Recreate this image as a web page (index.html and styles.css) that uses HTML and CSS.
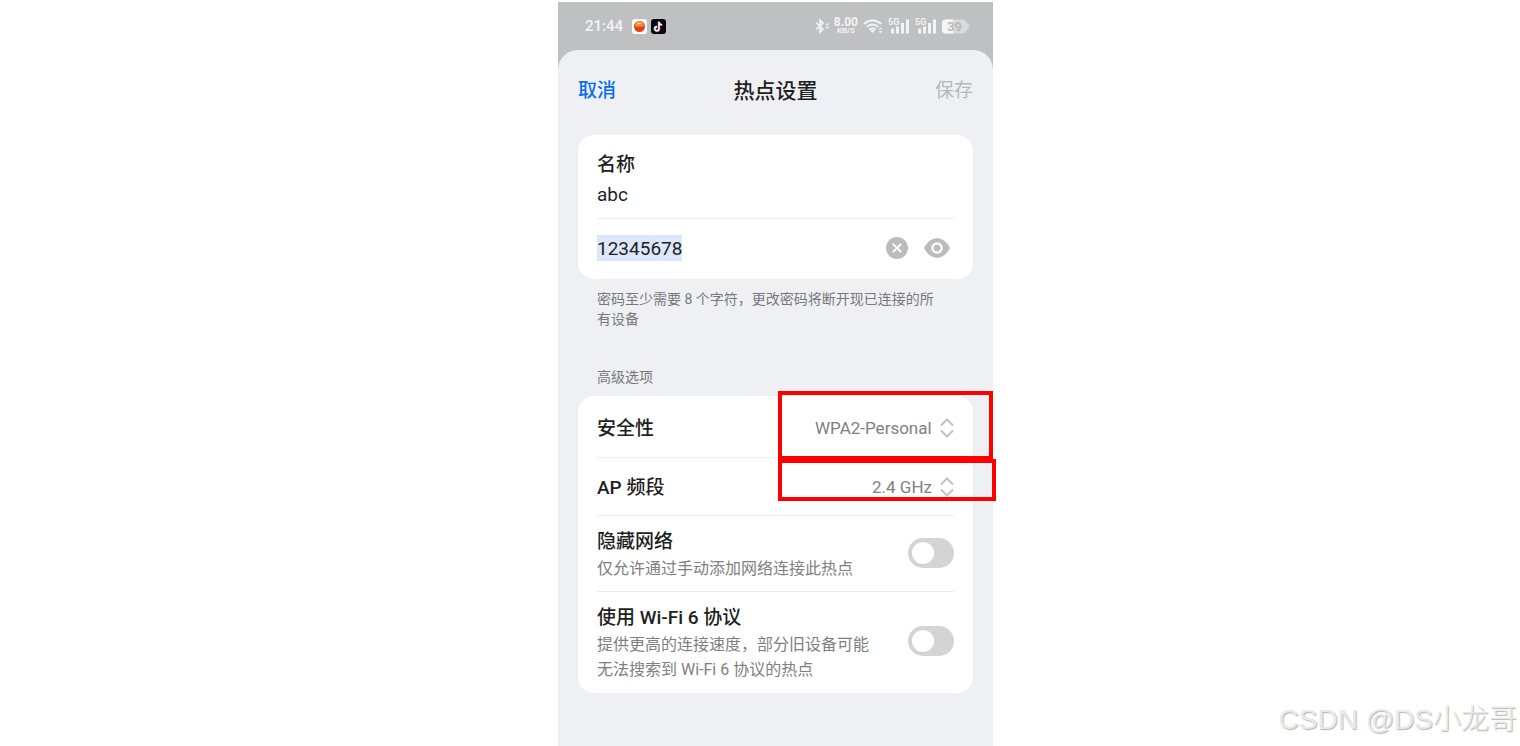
FILE: index.html
```html
<!DOCTYPE html>
<html lang="zh-CN">
<head>
  <meta charset="UTF-8">
  <meta name="viewport" content="width=device-width, initial-scale=1.0">
  <title>热点设置</title>
  <link rel="stylesheet" href="styles.css">
</head>
<body>
  <main class="phone">
    <!-- 状态栏 -->
    <div class="status-bar">
      <span class="time">21:44</span>
      <svg class="app-icon" width="15" height="15" viewBox="0 0 15 15" aria-hidden="true">
        <rect width="15" height="15" rx="3" fill="#fff"/>
        <circle cx="7.5" cy="7.5" r="5.5" fill="#e2401a"/>
        <path d="M2.500 6.500Q4 2 8.500 2.200 12 3 12 6.500 10.500 9 8 7.500 5 9 2.500 6.500Z" fill="#f58a2c"/>
        <path d="M5 5l1.300-1.200.7 1.400L8.200 3.800l1.200 1.200" fill="none" stroke="#fff1cf" stroke-width=".8"/>
      </svg>
      <svg class="app-icon" width="15" height="15" viewBox="0 0 15 15" aria-hidden="true">
        <rect width="15" height="15" rx="3" fill="#07070e"/>
        <g fill="none" stroke-width="1.700">
          <path d="M7.600 2.500v7a2.100 2.100 0 1 1-2-2.100M7.600 2.800q.5 2.500 3 2.800" stroke="#3ce0e4"/>
          <path d="M8.500 3.200v7a2.100 2.100 0 1 1-2-2.100M8.500 3.500q.5 2.500 3 2.800" stroke="#f33864"/>
          <path d="M8 2.800v7a2.100 2.100 0 1 1-2-2.100M8 3.100q.5 2.500 3 2.800" stroke="#fff" stroke-width="1.300"/>
        </g>
      </svg>
      <div class="indicators">
        <svg width="14" height="16" viewBox="0 0 14 16" aria-hidden="true">
          <path d="M1 4.500l7 6.500-3 3v-12l3 3-7 6.500" fill="none" stroke="#f3f3f4" stroke-width="1.700"/>
          <path d="M10.500 7.200l1.700-2.500 1.700 2.500zM10.500 8.800l1.700 2.500 1.700-2.500z" fill="#f3f3f4"/>
        </svg>
        <div class="speed"><b>8.00</b><small>KB/S</small></div>
        <svg width="20" height="16" viewBox="0 0 20 16" aria-hidden="true">
          <g fill="none" stroke="#f3f3f4" stroke-width="1.900">
            <path d="M.8 6q8.700-7.600 17.400 0"/>
            <path d="M3.600 8.900q5.900-5 11.800 0"/>
            <path d="M6.200 11.600q3.300-2.600 6.600 0"/>
          </g>
          <path d="M7 12.300q2.500-1.600 5 0L9.500 15z" fill="#f3f3f4"/>
          <path d="M15.700 11.500l1.800-2.300 1.800 2.300zM15.700 13l1.800 2.300 1.800-2.300z" fill="#f3f3f4"/>
        </svg>
        <svg class="signal" width="22" height="16" viewBox="0 0 22 16">
          <text x="0" y="7">5G</text>
          <path d="M4.500 15.500v-5M9.500 15.500v-7M14.500 15.500v-10.500M19.500 15.500V1.500"/>
        </svg>
        <svg class="signal" width="22" height="16" viewBox="0 0 22 16">
          <text x="0" y="7">5G</text>
          <path d="M4.500 15.500v-5M9.500 15.500v-7M14.500 15.500v-10.500M19.500 15.500V1.500"/>
        </svg>
        <svg class="battery" width="27" height="15" viewBox="0 0 27 15">
          <path d="M4 .5h16.500q3 0 4 3 2.500 1 2.500 4t-2.500 4q-1 3-4 3H4q-4 0-4-4v-6q0-4 4-4z" fill="#dadadc"/>
          <path d="M4 .5h7v14H4q-4 0-4-4v-6q0-4 4-4z" fill="#f6f6f7"/>
          <text x="5" y="12">39</text>
        </svg>
      </div>
    </div>

    <form class="sheet">
      <header class="sheet-header">
        <button type="button" class="link-btn cancel">取消</button>
        <h1>热点设置</h1>
        <button type="submit" class="link-btn save" disabled>保存</button>
      </header>

      <!-- 名称和密码 -->
      <section class="card">
        <div class="name-row">
          <label for="name">名称</label>
          <input type="text" id="name" value="abc">
        </div>
        <div class="password-row">
          <input type="text" id="password" class="selected" value="12345678" aria-label="密码">
          <button type="button" class="icon-btn" aria-label="清除">
            <svg width="22" height="22" viewBox="0 0 22 22">
              <circle cx="11" cy="11" r="11" fill="#bcbcbc"/>
              <path d="M7.300 7.300l7.400 7.400M14.700 7.300l-7.400 7.400" stroke="#fff" stroke-width="1.900" stroke-linecap="round"/>
            </svg>
          </button>
          <button type="button" class="icon-btn" aria-label="显示密码">
            <svg width="26" height="20" viewBox="0 0 26 20">
              <path d="M0 10Q5 .3 13 .3T26 10q-5 9.700-13 9.700T0 10z" fill="#bcbcbc"/>
              <circle cx="13" cy="10" r="4.600" fill="none" stroke="#fff" stroke-width="2.400"/>
            </svg>
          </button>
        </div>
      </section>
      <p class="note">密码至少需要 8 个字符，更改密码将断开现已连接的所<br>有设备</p>

      <!-- 高级选项 -->
      <h2>高级选项</h2>
      <section class="card options">
        <div class="row">
          <label for="security">安全性</label>
          <select id="security"><option>WPA2-Personal</option></select>
          <svg class="arrows" width="14" height="20" viewBox="0 0 14 20" aria-hidden="true"><path d="M1 7.500l6-6 6 6M1 12.500l6 6 6-6"/></svg>
        </div>
        <div class="row">
          <label for="band">AP 频段</label>
          <select id="band"><option>2.4 GHz</option></select>
          <svg class="arrows" width="14" height="20" viewBox="0 0 14 20" aria-hidden="true"><path d="M1 7.500l6-6 6 6M1 12.500l6 6 6-6"/></svg>
        </div>
        <div class="row switch-row">
          <div class="text">
            <label for="hidden-network">隐藏网络</label>
            <p>仅允许通过手动添加网络连接此热点</p>
          </div>
          <input type="checkbox" role="switch" id="hidden-network" class="switch">
        </div>
        <div class="row switch-row">
          <div class="text">
            <label for="wifi6">使用 Wi-Fi 6 协议</label>
            <p>提供更高的连接速度，部分旧设备可能<br>无法搜索到 Wi-Fi 6 协议的热点</p>
          </div>
          <input type="checkbox" role="switch" id="wifi6" class="switch">
        </div>
      </section>
    </form>

    <div class="mark mark-security"></div>
    <div class="mark mark-band"></div>
  </main>
  <div class="watermark">CSDN @DS小龙哥</div>
</body>
</html>
```
FILE: styles.css
```css
* {
  box-sizing: border-box;
}

body {
  margin: 0;
  padding: 2px 0 0 31px;
  min-height: 100vh;
  display: flex;
  justify-content: center;
  background: #fff;
  color: #1e1f21;
  font-family: Roboto, "Noto Sans CJK SC", sans-serif;
}

input,
select,
button {
  font-family: inherit;
  border: none;
  padding: 0;
  background: none;
}

h1,
h2,
p {
  margin: 0;
}

.phone {
  position: relative;
  width: 100%;
  max-width: 435px;
  display: flex;
  flex-direction: column;
  background: #bfc0c2;
}

/* 状态栏 */
.status-bar {
  display: flex;
  align-items: center;
  height: 48px;
  padding: 0 24px 0 27px;
  color: #f3f3f4;
}

.time {
  font-size: 15px;
  font-weight: 500;
  margin-right: 9px;
}

.app-icon {
  margin-right: 4px;
}

.indicators {
  display: flex;
  align-items: center;
  gap: 5px;
  margin-left: auto;
}

.speed {
  display: flex;
  flex-direction: column;
  align-items: center;
  line-height: 8px;
}

.speed b {
  font-size: 12px;
  line-height: 10px;
}

.speed small {
  font-size: 8px;
  font-weight: 700;
}

.signal text {
  font-size: 9px;
  font-weight: 700;
  fill: #f3f3f4;
}

.signal path {
  stroke: #f3f3f4;
  stroke-width: 3;
}

.battery text {
  font-size: 13px;
  font-weight: 700;
  fill: #b9babc;
}

/* 设置面板 */
.sheet {
  flex: 1;
  padding: 0 20px;
  border-radius: 20px 20px 0 0;
  background: #eff0f3;
}

.sheet-header {
  display: flex;
  justify-content: space-between;
  align-items: center;
  height: 85px;
  padding-bottom: 8px;
}

.sheet-header h1 {
  font-size: 21px;
  font-weight: 500;
}

.link-btn {
  font-size: 19px;
}

.cancel {
  color: #0a6cf0;
  font-weight: 500;
}

.save {
  color: #b7b8ba;
}

.card {
  padding: 0 19px;
  border-radius: 16px;
  background: #fff;
}

label {
  font-size: 19px;
  font-weight: 500;
  line-height: 28px;
}

.name-row {
  display: flex;
  flex-direction: column;
  height: 84px;
  padding-top: 16px;
  border-bottom: 1px solid #ededee;
}

.name-row input,
.password-row input {
  color: #1e1f21;
  font-size: 19px;
  height: 26px;
}

.name-row input {
  margin-top: 2px;
}

.password-row {
  display: flex;
  align-items: center;
  gap: 16px;
  height: 60px;
  padding: 0 4px 2px 0;
}

.password-row .selected {
  field-sizing: content;
  margin-right: auto;
  background: #dbe7fd;
}

.icon-btn,
.icon-btn svg {
  display: block;
}

.note,
h2 {
  padding: 0 19px;
  color: #77787a;
  font-size: 14px;
  font-weight: 400;
  line-height: 20px;
}

.note {
  padding-top: 10px;
}

h2 {
  padding-top: 38px;
  padding-bottom: 9px;
}

/* 选项列表 */
.options {
  padding-top: 3px;
}

.row {
  display: flex;
  align-items: center;
  height: 58px;
}

.row + .row {
  border-top: 1px solid #ededee;
}

.row label {
  padding-top: 2px;
}

.row select {
  appearance: none;
  margin-left: auto;
  color: #808080;
  font-size: 17px;
}

.arrows {
  margin-left: 8px;
  fill: none;
  stroke: #c2c2c2;
  stroke-width: 2;
}

.switch-row {
  height: auto;
  padding: 10px 0;
  justify-content: space-between;
}

.switch-row label {
  display: block;
}

.switch-row p {
  color: #808080;
  font-size: 16px;
  line-height: 25px;
}

.switch-row:last-child {
  padding-bottom: 11px;
}

.switch {
  appearance: none;
  flex: none;
  width: 46px;
  height: 30px;
  margin: 0 0 2px;
  padding: 4px;
  border-radius: 15px;
  background: #d4d4d4;
}

.switch::before {
  content: "";
  display: block;
  width: 22px;
  height: 22px;
  border-radius: 50%;
  background: #fff;
}

.switch:checked {
  background: #0a6cf0;
}

.switch:checked::before {
  margin-left: auto;
}

/* 红色标注框 */
.mark {
  position: absolute;
  left: 220px;
  border: 4px solid #f00;
  pointer-events: none;
}

.mark-security {
  top: 389px;
  width: 215px;
  height: 69px;
}

.mark-band {
  top: 457px;
  width: 218px;
  height: 42px;
}

.watermark {
  position: absolute;
  right: 3px;
  bottom: 8px;
  color: #e9e9e9;
  font-family: "Liberation Sans", "Noto Sans CJK SC", sans-serif;
  font-size: 28px;
  font-weight: 300;
  line-height: 36px;
  text-shadow: 1px 1px 1px #b4b4b4;
}
```
